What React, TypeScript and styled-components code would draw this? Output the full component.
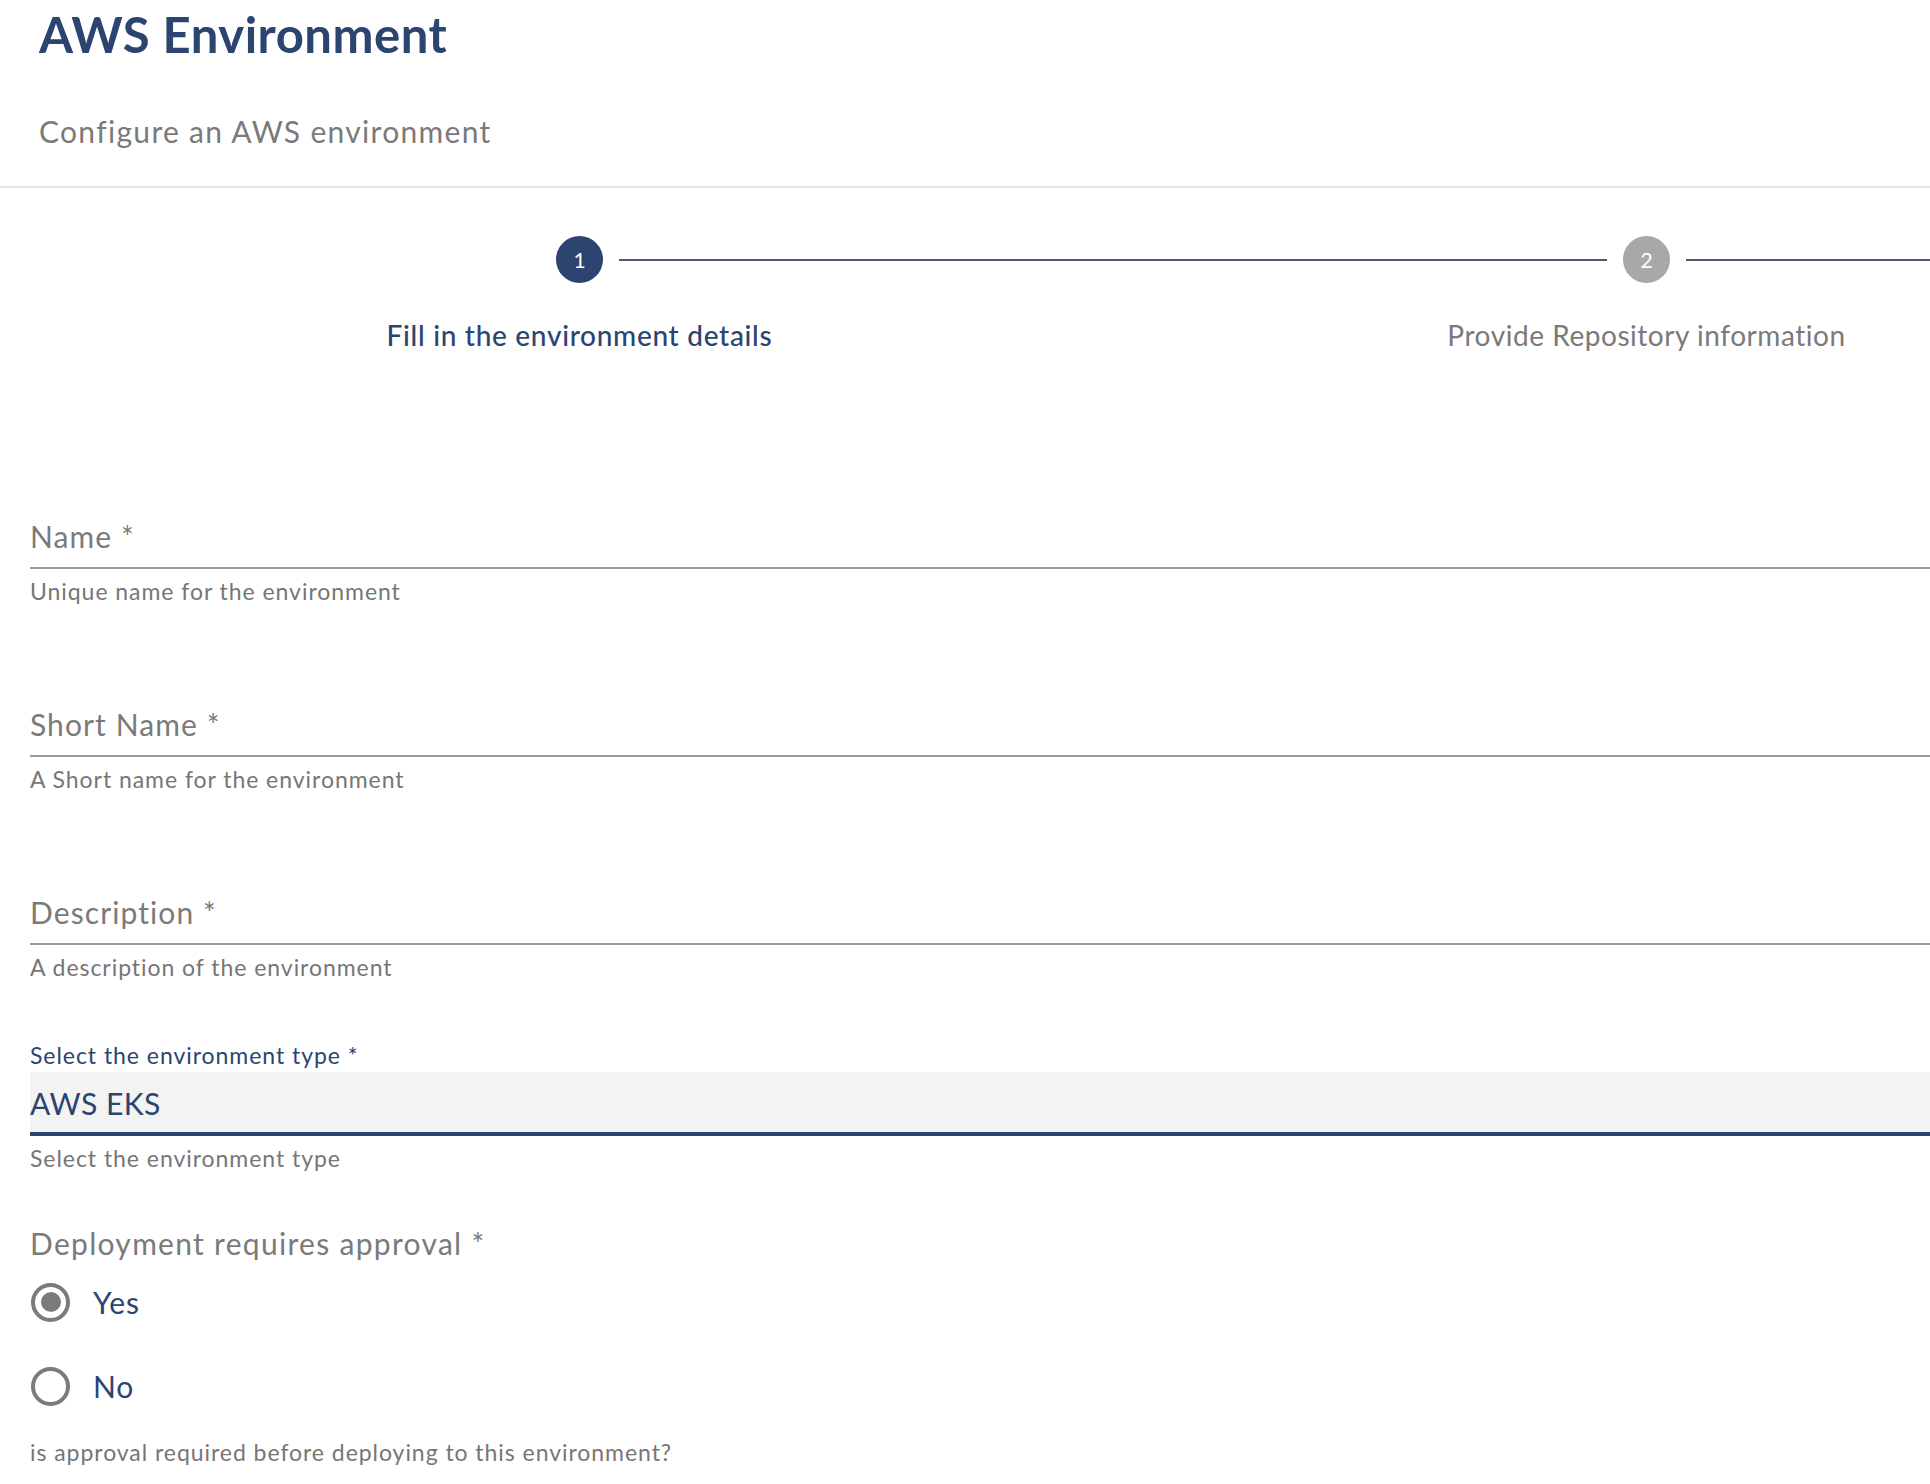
import React from 'react';
import styled, { createGlobalStyle } from 'styled-components';

const NAVY = '#2c4470';
const GREY_TEXT = '#7a7a7a';

const GlobalStyle = createGlobalStyle`
	html, body {
		margin: 0;
		padding: 0;
		background: #ffffff;
		overflow: hidden;
	}
	body {
		font-family: Lato, "Open Sans", sans-serif;
		font-variant-ligatures: none;
		font-feature-settings: "liga" 0, "clig" 0;
	}
`;

// the stepper keeps going past the right edge (review step is off screen)
const steps = [
	{ id: 1, label: 'Fill in the environment details' },
	{ id: 2, label: 'Provide Repository information' },
];

const fields = [
	{ label: 'Name', help: 'Unique name for the environment' },
	{ label: 'Short Name', help: 'A Short name for the environment' },
	{ label: 'Description', help: 'A description of the environment' },
];

function App() {
	const activeStep = 0;
	const [approval, setApproval] = React.useState('yes');

	return (
		<>
			<GlobalStyle />
			<Pagina>
				<Cabecalho>
					<Titulo>AWS Environment</Titulo>
					<Subtitulo>Configure an AWS environment</Subtitulo>
				</Cabecalho>

				<Stepper>
					{steps.map((s, ind) => (
						<Step key={s.id}>
							<IconRow>
								<Connector $hidden={ind === 0} $side="left" />
								<StepCircle $active={ind === activeStep}>{s.id}</StepCircle>
								<Connector $hidden={false} $side="right" />
							</IconRow>
							<StepLabel $active={ind === activeStep}>{s.label}</StepLabel>
						</Step>
					))}
				</Stepper>

				<Formulario>
					{fields.map((f) => (
						<Campo key={f.label}>
							<InputBox>
								<FieldLabel>{f.label} *</FieldLabel>
							</InputBox>
							<Helper>{f.help}</Helper>
						</Campo>
					))}

					<SelectCampo>
						<SelectLabel>Select the environment type *</SelectLabel>
						<SelectBox>
							<SelectValue>AWS EKS</SelectValue>
						</SelectBox>
						<Helper>Select the environment type</Helper>
					</SelectCampo>

					<RadioCampo>
						<RadioTitulo>Deployment requires approval *</RadioTitulo>
						<RadioRow onClick={() => setApproval('yes')}>
							<RadioCircle $checked={approval === 'yes'} />
							<RadioText>Yes</RadioText>
						</RadioRow>
						<RadioRow onClick={() => setApproval('no')}>
							<RadioCircle $checked={approval === 'no'} />
							<RadioText>No</RadioText>
						</RadioRow>
						<Helper $gap={11}>is approval required before deploying to this environment?</Helper>
					</RadioCampo>
				</Formulario>
			</Pagina>
		</>
	);
}

export default App;

const Pagina = styled.div`
	display: flex;
	flex-direction: column;
	width: 1930px;
	min-height: 1484px;
	overflow: hidden;
`;

const Cabecalho = styled.div`
	padding: 5px 39px 37px;
	border-bottom: 2px solid #e3e3e3;
`;

const Titulo = styled.h1`
	margin: 0;
	font-size: 49px;
	line-height: 59px;
	font-weight: 700;
	letter-spacing: 0.5px;
	color: ${NAVY};
`;

const Subtitulo = styled.div`
	margin-top: 49px;
	font-size: 30px;
	line-height: 36px;
	letter-spacing: 1.3px;
	color: ${GREY_TEXT};
`;

const Stepper = styled.div`
	display: flex;
	flex-direction: row;
	width: max-content;
	padding-left: 46px;
	margin-top: 48px;
`;

const Step = styled.div`
	display: flex;
	flex-direction: column;
	align-items: center;
	width: 1067px;
	flex-shrink: 0;
`;

const IconRow = styled.div`
	display: flex;
	flex-direction: row;
	align-items: center;
	width: 100%;
	height: 47px;
`;

const Connector = styled.div<{ $hidden: boolean; $side: 'left' | 'right' }>`
	flex: 1;
	height: 2px;
	background-color: ${(p) => (p.$hidden ? 'transparent' : '#4e5a72')};
	${(p) => (p.$side === 'left' ? 'margin-right: 16px;' : 'margin-left: 16px;')}
`;

const StepCircle = styled.div<{ $active: boolean }>`
	display: flex;
	align-items: center;
	justify-content: center;
	width: 47px;
	height: 47px;
	border-radius: 50%;
	background-color: ${(p) => (p.$active ? NAVY : '#a8a8a8')};
	color: #ffffff;
	font-size: 21px;
	line-height: 1;
	flex-shrink: 0;
`;

const StepLabel = styled.div<{ $active: boolean }>`
	margin-top: 35px;
	font-size: 28px;
	line-height: 34px;
	font-weight: ${(p) => (p.$active ? 500 : 400)};
	letter-spacing: ${(p) => (p.$active ? '0.7px' : '0.55px')};
	color: ${(p) => (p.$active ? NAVY : GREY_TEXT)};
	white-space: nowrap;
`;

const Formulario = styled.div`
	display: flex;
	flex-direction: column;
	padding-left: 30px;
	margin-top: 166px;
`;

const Campo = styled.div`
	margin-bottom: 102px;
`;

const InputBox = styled.div`
	height: 49px;
	border-bottom: 2px solid #9b9b9b;
`;

const FieldLabel = styled.label`
	display: block;
	font-size: 30px;
	line-height: 36px;
	letter-spacing: 1.1px;
	color: ${GREY_TEXT};
`;

const Helper = styled.div<{ $gap?: number }>`
	margin-top: ${(p) => p.$gap ?? 9}px;
	font-size: 23px;
	line-height: 26px;
	letter-spacing: 0.95px;
	color: #767676;
`;

const SelectCampo = styled.div`
	margin-top: -40px;
	display: flex;
	flex-direction: column;
`;

const SelectLabel = styled.label`
	font-size: 23px;
	line-height: 26px;
	letter-spacing: 0.95px;
	color: ${NAVY};
`;

const SelectBox = styled.div`
	margin-top: 4px;
	box-sizing: content-box;
	height: 47px;
	padding-top: 13px;
	background-color: #f3f3f3;
	border-bottom: 4px solid ${NAVY};
`;

const SelectValue = styled.div`
	font-size: 30px;
	line-height: 36px;
	letter-spacing: 0.5px;
	color: ${NAVY};
`;

const RadioCampo = styled.div`
	margin-top: 55px;
	display: flex;
	flex-direction: column;
`;

const RadioTitulo = styled.div`
	font-size: 30px;
	line-height: 34px;
	letter-spacing: 1.3px;
	color: ${GREY_TEXT};
`;

const RadioRow = styled.div`
	display: flex;
	flex-direction: row;
	align-items: center;
	height: 84px;
	cursor: pointer;
`;

const RadioCircle = styled.span<{ $checked: boolean }>`
	position: relative;
	box-sizing: border-box;
	width: 39px;
	height: 39px;
	margin-left: 1px;
	border: 4px solid #7b7b7b;
	border-radius: 50%;
	flex-shrink: 0;

	&::after {
		content: '';
		position: absolute;
		top: 50%;
		left: 50%;
		width: 20px;
		height: 20px;
		margin: -10px 0 0 -10px;
		border-radius: 50%;
		background-color: #7b7b7b;
		display: ${(p) => (p.$checked ? 'block' : 'none')};
	}
`;

const RadioText = styled.span`
	margin-left: 23px;
	font-size: 30px;
	line-height: 36px;
	letter-spacing: 0.8px;
	color: ${NAVY};
`;
